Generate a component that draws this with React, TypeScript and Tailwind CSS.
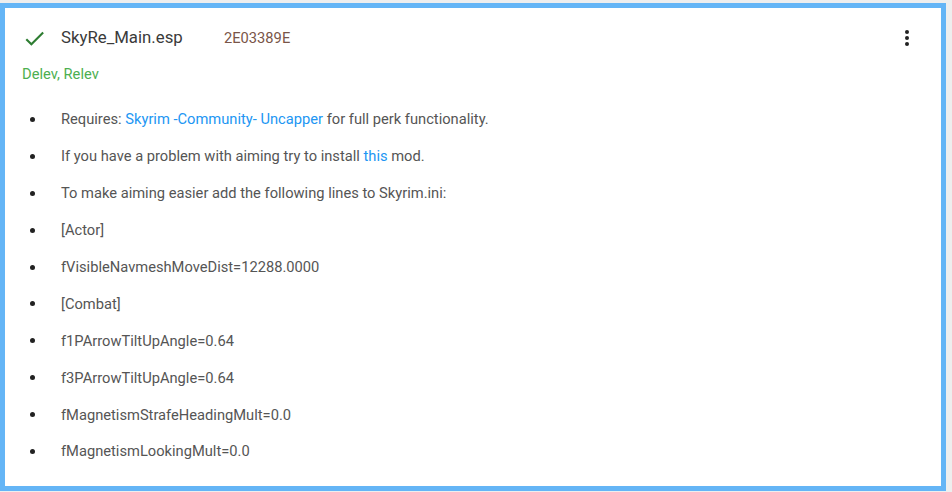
import React from 'react';

const lines: React.ReactNode[] = [
  <>
    Requires: <a className="text-[#2196f3]">Skyrim -Community- Uncapper</a> for full perk functionality.
  </>,
  <>
    If you have a problem with aiming try to install <a className="text-[#2196f3]">this</a> mod.
  </>,
  'To make aiming easier add the following lines to Skyrim.ini:',
  '[Actor]',
  'fVisibleNavmeshMoveDist=12288.0000',
  '[Combat]',
  'f1PArrowTiltUpAngle=0.64',
  'f3PArrowTiltUpAngle=0.64',
  'fMagnetismStrafeHeadingMult=0.0',
  'fMagnetismLookingMult=0.0',
];

const App: React.FC = () => {
  return (
    <div className="w-[952px] h-[492px] bg-[#eeeeee] pt-[3px] pr-[6px] overflow-hidden" style={{ fontFamily: 'Roboto, "Noto Sans", sans-serif' }}>
      <div className="h-[488px] bg-white border-[5px] border-[#64b5f6] pl-[17px] pr-[32px]">
        <div className="flex items-center h-[24px] mt-[18px]">
          <svg width="25" height="25" viewBox="0 0 24 24" className="shrink-0">
            <path d="M9 16.17 4.83 12l-1.42 1.41L9 19 21 7l-1.41-1.41z" fill="#2e7d32" />
          </svg>
          <span className="ml-[14px] w-[163px] text-[16.8px] text-[#3a3a3a]">SkyRe_Main.esp</span>
          <span className="text-[14.7px] text-[#795548]">2E03389E</span>
          <div className="ml-auto flex flex-col gap-[2px] items-center w-[4px]">
            <span className="w-[4px] h-[4px] rounded-full bg-[#222222]" />
            <span className="w-[4px] h-[4px] rounded-full bg-[#222222]" />
            <span className="w-[4px] h-[4px] rounded-full bg-[#222222]" />
          </div>
        </div>
        <div className="mt-[14px] text-[14.7px] leading-[20px] text-[#4caf50]">Delev, Relev</div>
        <ul className="mt-[17px]">
          {lines.map((line, i) => (
            <li key={i} className="flex items-center h-[36.9px] text-[14.7px] text-[#555555]">
              <span className="w-[5px] h-[5px] rounded-full bg-[#222222] ml-[8px] mr-[26px] shrink-0" />
              <span>{line}</span>
            </li>
          ))}
        </ul>
      </div>
    </div>
  );
};

export default App;
